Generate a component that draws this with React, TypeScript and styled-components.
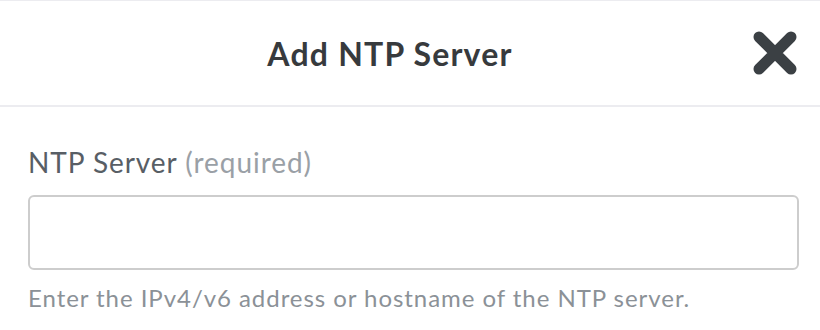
import React from "react";
import styled, { createGlobalStyle } from "styled-components";

const Global = createGlobalStyle`
  html, body { margin: 0; padding: 0; background: #ffffff; }
  body { font-family: "Lato", "Open Sans", sans-serif; }
  * { box-sizing: border-box; }
`;

const Dialog = styled.div`
  width: 820px;
  height: 330px;
  background: #ffffff;
  border-top: 1px solid #ececf0;
  display: flex;
  flex-direction: column;
  overflow: hidden;
`;

const Header = styled.header`
  height: 106px;
  display: flex;
  align-items: center;
  padding: 0 22px 0 28px;
  border-bottom: 2px solid #ececf0;
`;

const Title = styled.h2`
  flex: 1;
  margin: 0;
  text-align: center;
  font-family: "Lato", sans-serif;
  font-weight: 700;
  font-size: 32px;
  color: #373a3d;
  letter-spacing: 1.2px;
`;

const CloseButton = styled.button`
  width: 46px;
  height: 46px;
  padding: 0;
  border: none;
  background: transparent;
  display: flex;
  align-items: center;
  justify-content: center;
  cursor: pointer;
`;

const Body = styled.div`
  padding: 38px 21px 0 28px;
  display: flex;
  flex-direction: column;
`;

const Label = styled.label`
  font-family: "Lato", sans-serif;
  font-size: 28px;
  line-height: 34px;
  letter-spacing: 0.95px;
  color: #585e65;
`;

const Hint = styled.span`
  color: #9aa0a6;
`;

const Input = styled.input`
  margin-top: 16px;
  height: 75px;
  width: 100%;
  border: 2px solid #cdcdcd;
  border-radius: 6px;
  background: #fff;
  font-size: 26px;
  padding: 0 16px;
  outline: none;
`;

const Help = styled.p`
  margin: 13px 0 0;
  font-family: "Lato", sans-serif;
  font-size: 24px;
  line-height: 30px;
  letter-spacing: 0.95px;
  color: #8b9197;
`;

export default function App() {
  return (
    <>
      <Global />
      <Dialog>
        <Header>
          <Title>Add NTP Server</Title>
          <CloseButton aria-label="Close">
            <svg width="46" height="46" viewBox="0 0 46 46">
              <path
                d="M7 7 L39 39 M39 7 L7 39"
                stroke="#3b4044"
                strokeWidth="11"
                strokeLinecap="round"
                fill="none"
              />
            </svg>
          </CloseButton>
        </Header>
        <Body>
          <Label htmlFor="ntp">
            NTP Server <Hint>(required)</Hint>
          </Label>
          <Input id="ntp" type="text" />
          <Help>Enter the IPv4/v6 address or hostname of the NTP server.</Help>
        </Body>
      </Dialog>
    </>
  );
}
